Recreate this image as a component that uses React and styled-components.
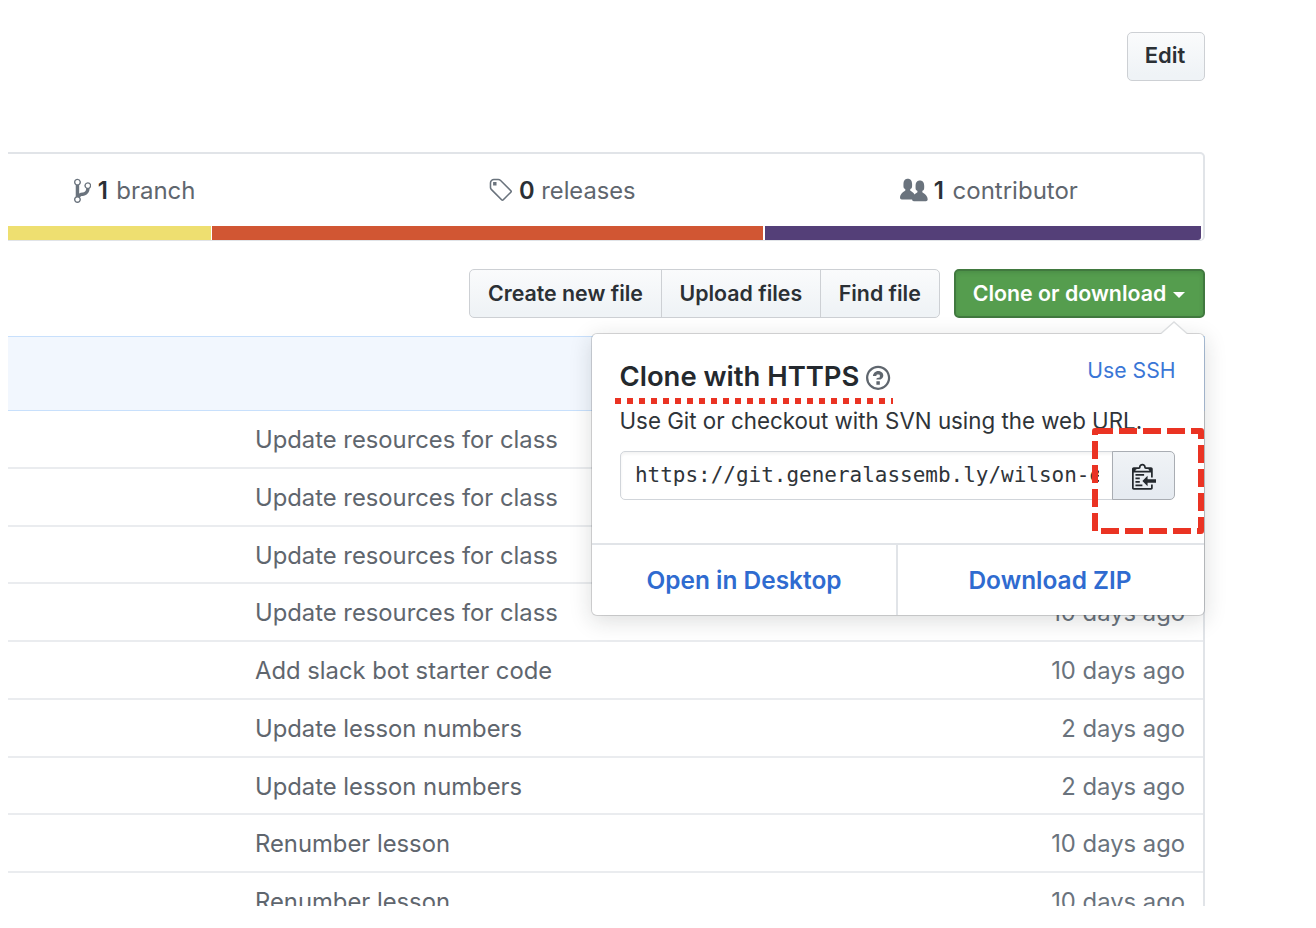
import React from "react";
import styled, { createGlobalStyle, css } from "styled-components";

const GlobalStyle = createGlobalStyle`
  body {
    margin: 0;
    background: #fff;
    color: #24292e;
    font-family: Inter, "Liberation Sans", sans-serif;
  }
  * { box-sizing: border-box; }
`;

const Page = styled.main`
  position: relative;
  width: 1316px;
  height: 906px;
  padding: 31.5px 111px 0 8px;
  overflow: hidden;
`;

const TopBar = styled.div`
  display: flex;
  justify-content: flex-end;
  height: 120.5px;
`;

const Button = styled.button`
  display: flex;
  align-items: center;
  justify-content: center;
  width: ${(p) => p.$width}px;
  height: 49px;
  padding: 0 ${(p) => p.$nudge || 0}px 2px 0;
  border: 1.6px solid #cdd0d4;
  border-radius: 5px;
  background: linear-gradient(#fafbfc, #eff3f6 90%);
  color: #2b3035;
  font: 600 ${(p) => p.$size || 21.35}px Inter, sans-serif;
  white-space: nowrap;
  ${(p) =>
    p.$primary &&
    css`
      border: 2px solid #41793f;
      background: #559d4e;
      color: #fff;
      box-shadow: inset 0 2px 4px rgba(20, 70, 32, 0.15);
    `}
`;

const Caret = styled.span`
  margin: 4px 0 0 7px;
  border: 6.5px solid transparent;
  border-top-color: currentColor;
  border-bottom: 0;
`;

const Summary = styled.section`
  display: flex;
  flex-direction: column;
  height: 89px;
  border: 2px solid #e1e4e8;
  border-width: 2px 2px 1px 0;
  border-radius: 0 5px 5px 0;
`;

const Stats = styled.div`
  display: flex;
  height: 72px;
`;

const Stat = styled.div`
  display: flex;
  align-items: center;
  width: ${(p) => p.$width}px;
  padding: 0 0 0 ${(p) => p.$inset}px;
  color: #5f666e;
  font-size: ${(p) => p.$size || 24}px;
  white-space: pre;
  svg { flex: none; margin: 2px ${(p) => p.$gap}px 0 0; fill: #6a737d; }
`;

const Count = styled.b`
  margin-right: ${(p) => p.$gap || 0}px;
  font-weight: 600;
  color: #2b3035;
`;

const LanguageBar = styled.div`
  display: flex;
  gap: 1.5px;
  height: 14px;
  padding-right: 2px;
`;

const Language = styled.span`
  flex: ${(p) => p.$share};
  background: ${(p) => p.$color};
  &:last-child { border-radius: 0 0 3px 0; }
`;

const Actions = styled.div`
  display: flex;
  justify-content: flex-end;
  gap: 14px;
  height: 95px;
  padding-top: 28px;
`;

const ButtonGroup = styled.div`
  display: flex;
  button:not(:first-child) {
    margin-left: -1.6px;
    border-top-left-radius: 0;
    border-bottom-left-radius: 0;
  }
  button:not(:last-child) {
    border-top-right-radius: 0;
    border-bottom-right-radius: 0;
  }
`;

const CommitBar = styled.div`
  height: 75px;
  border: 1.6px solid #c8e0fc;
  border-width: 1.6px 1.6px 1.6px 0;
  background: #f2f7fe;
`;

const Files = styled.div`
  border-right: 2px solid #e1e4e8;
`;

const FileRow = styled.div`
  display: flex;
  justify-content: space-between;
  height: 57.75px;
  padding: 0 18px 0 247px;
  border-bottom: 2px solid #eaecef;
  color: #5f666e;
  font-size: 23.8px;
  line-height: 57px;
  white-space: nowrap;
`;

const Age = styled.span`
  color: #6a737d;
`;

const Popover = styled.section`
  position: absolute;
  left: 591px;
  top: 332.5px;
  width: 614px;
  height: 283px;
  display: flex;
  flex-direction: column;
  border: 1.6px solid rgba(27, 31, 35, 0.17);
  border-radius: 6px;
  background: #fff;
  background-clip: padding-box;
  box-shadow: 0 5px 22px rgba(27, 31, 35, 0.15);
`;

const Pointer = styled.svg`
  position: absolute;
  top: -13px;
  right: 16px;
`;

const PopoverBody = styled.div`
  flex: 1;
  padding: 24.5px 28.5px 0 27.5px;
`;

const TitleRow = styled.div`
  display: flex;
  align-items: flex-start;
  justify-content: space-between;
  height: 46px;
`;

const Title = styled.h1`
  display: flex;
  align-items: center;
  margin: 0;
  font-size: 27.45px;
  font-weight: 600;
  line-height: 36px;
  white-space: nowrap;
  svg { margin: 3px 0 0 7px; fill: #5f666e; }
`;

const SshLink = styled.a`
  color: #3a76d6;
  font-size: 21.2px;
  line-height: 25px;
`;

const Hint = styled.p`
  margin: 0;
  font-size: 22.33px;
  line-height: 34px;
  color: #2f3439;
  white-space: nowrap;
`;

const CloneField = styled.div`
  display: flex;
  height: 49px;
  margin: 13px 0 0 0.5px;
`;

const UrlBox = styled.div`
  width: 494px;
  padding: 0 14px;
  border: 1.6px solid #d1d5da;
  border-radius: 5px 0 0 5px;
  box-shadow: inset 0 2px 3px rgba(27, 31, 35, 0.06);
`;

const Url = styled.div`
  overflow: hidden;
  color: #2f3439;
  font: 20.97px/47px "DejaVu Sans Mono", monospace;
  white-space: nowrap;
`;

const CopyButton = styled.button`
  display: flex;
  align-items: center;
  justify-content: center;
  width: 63px;
  margin-left: -1.6px;
  padding: 1px 0 0;
  border: 1.6px solid #a9adb3;
  border-radius: 0 5px 5px 0;
  background: linear-gradient(#f0f3f6, #e6ebf1 90%);
  svg { fill: #24292e; }
`;

const PopoverFooter = styled.div`
  display: flex;
  height: 72px;
  padding-right: 2px;
  border-top: 2px solid #e1e4e8;
`;

const FooterLink = styled.a`
  flex: 1;
  color: #2f6bd0;
  font-size: 24.45px;
  font-weight: 600;
  line-height: 70px;
  text-align: center;
  & + & { border-left: 2px solid #e1e4e8; }
`;

const DottedMark = styled.div`
  position: absolute;
  left: 615px;
  top: 398px;
  width: 278px;
  height: 6px;
  background: repeating-linear-gradient(90deg, #ea3323 0 6px, transparent 6px 12px);
`;

const DashedMark = styled.svg`
  position: absolute;
  left: 1092px;
  top: 428px;
`;

const icons = {
  branch: [10, "M10 5c0-1.11-.89-2-2-2a1.993 1.993 0 0 0-1 3.72v.3c-.02.52-.23.98-.63 1.38-.4.4-.86.61-1.38.63-.83.02-1.48.16-2 .45V4.72a1.993 1.993 0 0 0-1-3.72C.88 1 0 1.89 0 3a2 2 0 0 0 1 1.72v6.56c-.59.35-1 .99-1 1.72 0 1.11.89 2 2 2 1.11 0 2-.89 2-2 0-.53-.2-1-.53-1.36.09-.06.48-.41.59-.47.25-.11.56-.17.94-.17 1.05-.05 1.95-.45 2.75-1.25S8.95 7.77 9 6.73h-.02C9.59 6.37 10 5.73 10 5zM2 1.8c.66 0 1.2.55 1.2 1.2 0 .65-.55 1.2-1.2 1.2C1.35 4.2.8 3.65.8 3c0-.65.55-1.2 1.2-1.2zm0 12.41c-.66 0-1.2-.55-1.2-1.2 0-.65.55-1.2 1.2-1.2.65 0 1.2.55 1.2 1.2 0 .65-.55 1.2-1.2 1.2zm6-8c-.66 0-1.2-.55-1.2-1.2 0-.65.55-1.2 1.2-1.2.65 0 1.2.55 1.2 1.2 0 .65-.55 1.2-1.2 1.2z"],
  tag: [15, "M7.73 1.73C7.26 1.26 6.62 1 5.96 1H3.5C2.13 1 1 2.13 1 3.5v2.47c0 .66.27 1.3.73 1.77l6.06 6.06c.39.39 1.02.39 1.41 0l4.59-4.59a.996.996 0 0 0 0-1.41L7.73 1.73zM2.38 7.09c-.31-.3-.47-.7-.47-1.13V3.5c0-.88.72-1.59 1.59-1.59h2.47c.42 0 .83.16 1.13.47l6.14 6.13-4.73 4.73-6.13-6.15zM3.01 3h2v2H3V3h.01z"],
  people: [16, "M16 12.999c0 .439-.45 1-1 1H7.995c-.539 0-.994-.447-.995-.999H1c-.54 0-1-.561-1-1 0-2.634 3-4 3-4s.229-.409 0-1c-.841-.621-1.058-.59-1-3 .058-2.419 1.367-3 2.5-3s2.442.58 2.5 3c.058 2.41-.159 2.379-1 3-.229.59 0 1 0 1s1.549.711 2.42 2.088C9.196 9.369 10 8.999 10 8.999s.229-.409 0-1c-.841-.62-1.058-.59-1-3 .058-2.419 1.367-3 2.5-3s2.437.581 2.495 3c.059 2.41-.158 2.38-1 3-.229.59 0 1 0 1s3.005 1.366 3.005 4"],
  question: [14, "M6 10h2v2H6v-2zm4-3.5C10 8.64 8 9 8 9H6c0-.55.45-1 1-1h.5c.28 0 .5-.22.5-.5v-1c0-.28-.22-.5-.5-.5h-1c-.28 0-.5.22-.5.5V7H4c0-1.5 1.5-3 3-3s3 1 3 2.5zM7 2.3c3.14 0 5.7 2.56 5.7 5.7s-2.56 5.7-5.7 5.7A5.71 5.71 0 0 1 1.3 8c0-3.14 2.56-5.7 5.7-5.7zM7 1C3.14 1 0 4.14 0 8s3.14 7 7 7 7-3.14 7-7-3.14-7-7-7z"],
  clippy: [14, "M2 13h4v1H2v-1zm5-6H2v1h5V7zm2 3V8l-3 3 3 3v-2h5v-2H9zM4.5 9H2v1h2.5V9zM2 12h2.5v-1H2v1zm9 1h1v2c-.02.28-.11.52-.3.7-.19.18-.42.28-.7.3H1c-.55 0-1-.45-1-1V4c0-.55.45-1 1-1h3c0-1.11.89-2 2-2 1.11 0 2 .89 2 2h3c.55 0 1 .45 1 1v5h-1V6H1v9h10v-2zM2 5h8c0-.55-.45-1-1-1H8c-.55 0-1-.45-1-1s-.45-1-1-1-1 .45-1 1-.45 1-1 1H3c-.55 0-1 .45-1 1z"],
};

function Icon({ name, scale = 1.73 }) {
  const [w, d] = icons[name];
  return (
    <svg width={w * scale} height={16 * scale} viewBox={`0 0 ${w} 16`} aria-hidden="true">
      <path fillRule="evenodd" d={d} />
    </svg>
  );
}

const files = [
  ["Update resources for class", ""],
  ["Update resources for class", ""],
  ["Update resources for class", ""],
  ["Update resources for class", "10 days ago"],
  ["Add slack bot starter code", "10 days ago"],
  ["Update lesson numbers", "2 days ago"],
  ["Update lesson numbers", "2 days ago"],
  ["Renumber lesson", "10 days ago"],
  ["Renumber lesson", "10 days ago"],
];

export default function App() {
  return (
    <Page>
      <GlobalStyle />
      <TopBar>
        <Button $width={78} $size={22} $nudge={2}>Edit</Button>
      </TopBar>
      <Summary>
        <Stats>
          <Stat $width={415} $inset={66} $gap={6.5}>
            <Icon name="branch" /><Count $gap={1.5}>1</Count> branch
          </Stat>
          <Stat $width={412} $inset={65} $gap={5.5} $size={23.7}>
            <Icon name="tag" scale={1.7} /><Count>0</Count> releases
          </Stat>
          <Stat $width={368} $inset={65} $gap={6}>
            <Icon name="people" /><Count $gap={2}>1</Count> contributor
          </Stat>
        </Stats>
        <LanguageBar>
          <Language $share={202.8} $color="#eedf70" />
          <Language $share={551.5} $color="#d15633" />
          <Language $share={436.5} $color="#543f78" />
        </LanguageBar>
      </Summary>
      <Actions>
        <ButtonGroup>
          <Button $width={193.5}>Create new file</Button>
          <Button $width={160.5}>Upload files</Button>
          <Button $width={120.5}>Find file</Button>
        </ButtonGroup>
        <Button $width={251} $nudge={1} $primary>Clone or download<Caret /></Button>
      </Actions>
      <CommitBar />
      <Files>
        {files.map(([message, age], i) => (
          <FileRow key={i}>
            <span>{message}</span>
            <Age>{age}</Age>
          </FileRow>
        ))}
      </Files>

      <Popover>
        <Pointer width="28" height="15" viewBox="0 0 28 15">
          <path d="M1 13 L14 1 L27 13 V15 H1 Z" fill="#fff" />
          <path d="M1 12.5 L14 1 L27 12.5" fill="none" stroke="#dcdee0" strokeWidth="1.4" />
        </Pointer>
        <PopoverBody>
          <TitleRow>
            <Title>Clone with HTTPS<Icon name="question" /></Title>
            <SshLink>Use SSH</SshLink>
          </TitleRow>
          <Hint>Use Git or checkout with SVN using the web URL.</Hint>
          <CloneField>
            <UrlBox><Url>https://git.generalassemb.ly/wilson-e</Url></UrlBox>
            <CopyButton aria-label="Copy"><Icon name="clippy" /></CopyButton>
          </CloneField>
        </PopoverBody>
        <PopoverFooter>
          <FooterLink>Open in Desktop</FooterLink>
          <FooterLink>Download ZIP</FooterLink>
        </PopoverFooter>
      </Popover>

      <DottedMark />
      <DashedMark width="112" height="106" viewBox="0 0 112 106">
        <path d="M3 3H109V103H3Z" fill="none" stroke="#ea3323" strokeWidth="6" strokeDasharray="18 6" strokeLinejoin="round" />
      </DashedMark>
    </Page>
  );
}
